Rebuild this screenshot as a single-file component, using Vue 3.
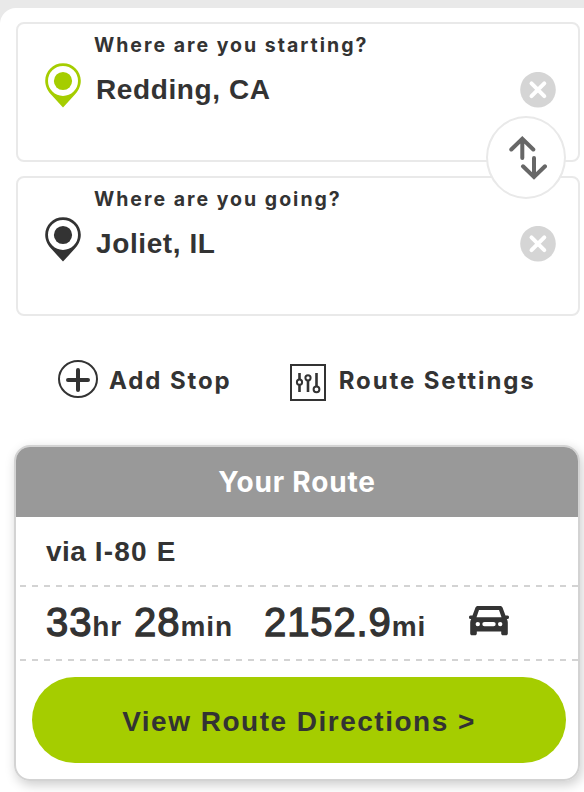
<template>
  <main class="planner">
    <section class="stops">
      <div v-for="stop in stops" :key="stop.id" class="stop">
        <label class="stop-label" :for="stop.id">{{ stop.label }}</label>
        <div class="stop-row">
          <svg class="pin" :class="stop.id" viewBox="0 0 36 45">
            <path fill="currentColor" fill-rule="evenodd" d="M18 0.2C8 0.2 0.2 8 0.2 17.800c0 6.200 3 10.700 6.800 14.800L18 44.600l11-12c3.800-4.100 6.800-8.600 6.800-14.800C35.800 8 28 0.200 18 0.200zM18 2.900a15 15 0 1 1 0 30a15 15 0 1 1 0-30z" />
            <circle cx="18" cy="18" r="9.100" fill="currentColor" />
          </svg>
          <span :id="stop.id" class="stop-value">{{ stop.value }}</span>
          <button class="clear" aria-label="Clear" @click="stop.value = ''">
            <svg viewBox="0 0 36 36">
              <circle cx="18" cy="17.700" r="17.800" fill="#d5d5d5" />
              <path d="M11.500 11.300l12.800 12.800M24.300 11.300L11.500 24.100" stroke="#fff" stroke-width="4" stroke-linecap="round" />
            </svg>
          </button>
        </div>
      </div>
      <button class="swap" aria-label="Swap stops" @click="swapStops">
        <svg viewBox="0 0 38 44" fill="none" stroke="#676767" stroke-width="4" stroke-linecap="round">
          <path d="M13.300 22V3M2.300 13.500L13.300 2.800l11 10.700" />
          <path d="M25 22v19M14 30.300L25 41l11-10.700" />
        </svg>
      </button>
    </section>

    <nav class="actions">
      <button class="action">
        <svg class="plus" viewBox="0 0 40 38" fill="none" stroke="#333">
          <ellipse cx="20" cy="19" rx="19" ry="18" stroke-width="2" />
          <path d="M20 10v20M10 20h20" stroke-width="4" stroke-linecap="round" />
        </svg>
        <span>Add Stop</span>
      </button>
      <button class="action">
        <svg class="sliders" viewBox="0 0 36 37" fill="none" stroke="#333">
          <rect x="1" y="1" width="34" height="35" stroke-width="2" />
          <path d="M9.500 9v6M9.500 21v7M18 17v11M26.500 9v13" stroke-width="2.600" />
          <g stroke-width="2">
            <circle cx="9.500" cy="18.200" r="2.600" />
            <circle cx="18" cy="13.800" r="2.600" />
            <circle cx="26.500" cy="25.300" r="2.900" />
          </g>
        </svg>
        <span>Route Settings</span>
      </button>
    </nav>

    <section class="route">
      <h2 class="route-title">Your Route</h2>
      <div class="via">via <b>{{ route.road }}</b></div>
      <div class="dashes"></div>
      <div class="stats">
        <span class="time">{{ route.hours }}<small>hr</small> {{ route.minutes }}<small>min</small></span>
        <span class="distance">{{ route.miles }}<small>mi</small></span>
        <svg class="car" viewBox="0 0 40 30">
          <path fill="#333" fill-rule="evenodd" d="M9 0h22c1.300 0 2.200.6 2.600 1.700L36.500 9.500h2c1 0 1.500.8 1.500 1.800s-.6 1.800-1.500 1.800h-.7c.7 1 1 2.200 1 3.500v10.900c0 1-.8 1.800-1.800 1.800h-3c-1 0-1.800-.8-1.800-1.800V25.500H7.800v2c0 1-.8 1.800-1.800 1.800H3c-1 0-1.800-.8-1.800-1.800V16.600c0-1.300.3-2.500 1-3.500h-.7C.6 13.100 0 12.300 0 11.300s.5-1.800 1.500-1.800h2L6.400 1.700C6.800.6 7.700 0 9 0zM10 4L7.500 11.200h25L30 4zM8.800 15.900a2.200 2.200 0 1 0 0 4.400a2.200 2.200 0 1 0 0-4.400zM15.500 15.900a2.200 2.200 0 0 0 0 4.400h9a2.200 2.200 0 0 0 0-4.400zM31.200 15.900a2.200 2.200 0 1 0 0 4.400a2.200 2.200 0 1 0 0-4.400z" />
        </svg>
      </div>
      <div class="dashes"></div>
      <button class="directions">View Route Directions &gt;</button>
    </section>
  </main>
</template>

<script setup>
import { reactive } from 'vue'

const stops = reactive([
  { id: 'start', label: 'Where are you starting?', value: 'Redding, CA' },
  { id: 'end', label: 'Where are you going?', value: 'Joliet, IL' }
])

const route = {
  road: 'I-80 E',
  hours: 33,
  minutes: 28,
  miles: '2152.9'
}

function swapStops() {
  const first = stops[0].value
  stops[0].value = stops[1].value
  stops[1].value = first
}
</script>

<style>
body {
  background: #e9e9e9;
  overflow: hidden;
}
</style>

<style scoped>
.planner {
  box-sizing: border-box;
  height: 784px;
  margin-top: 8px;
  padding: 14px 4px 0 14px;
  background: #fff;
  border-top-left-radius: 16px;
  color: #333;
  font-family: "Liberation Sans", Arial, sans-serif;
  font-size: 28px;
  font-weight: bold;
}

button {
  padding: 0;
  border: none;
  background: none;
  color: inherit;
  font: inherit;
  cursor: pointer;
}

svg {
  display: block;
}

.stops {
  position: relative;
  display: flex;
  flex-direction: column;
  gap: 14px;
  margin-left: 2px;
}

.stop {
  box-sizing: border-box;
  height: 140px;
  padding: 9px 22px 0 27px;
  border: 2px solid #e9e9e9;
  border-radius: 8px;
}

.stop-label {
  display: block;
  margin-left: 49px;
  font: 700 19.5px/24px Inter, sans-serif;
  letter-spacing: 2px;
}

.stop-row {
  display: flex;
  align-items: flex-end;
  height: 45px;
  margin-top: 6px;
}

.pin {
  width: 36px;
  height: 45px;
}

.pin.start {
  color: #a5cd00;
}

.stop-value {
  flex: 1;
  margin-left: 15px;
  line-height: 36px;
  letter-spacing: 0.6px;
}

.clear {
  width: 36px;
  height: 36px;
}

.swap {
  position: absolute;
  top: 94px;
  right: 14px;
  box-sizing: border-box;
  width: 80px;
  height: 83px;
  padding-left: 21px;
  border: 2px solid #e9e9e9;
  border-radius: 50%;
  background: #fff;
}

.swap svg {
  width: 38px;
  height: 44px;
}

.actions {
  display: flex;
  gap: 58px;
  height: 40px;
  margin: 44px 0 45px 44px;
}

.action {
  display: flex;
  font: 700 24px/42px Inter, sans-serif;
  letter-spacing: 1.9px;
}

.plus {
  width: 40px;
  height: 38px;
  margin-right: 11px;
}

.sliders {
  width: 36px;
  height: 37px;
  margin: 4px 13px 0 0;
}

.route {
  box-sizing: border-box;
  height: 336px;
  border: 2px solid #d3d3d3;
  border-radius: 16px;
  box-shadow: 2px 4px 12px rgba(0, 0, 0, 0.2);
  overflow: hidden;
}

.route-title {
  height: 70px;
  margin: 0;
  background: #999;
  color: #fff;
  text-align: center;
  font: 700 28px/70px Inter, sans-serif;
  letter-spacing: 0.8px;
}

.via {
  height: 68px;
  padding-left: 30px;
  line-height: 69px;
  letter-spacing: 0.5px;
}

.via b {
  letter-spacing: 1.2px;
}

.dashes {
  height: 2px;
  margin-left: 4px;
  background: repeating-linear-gradient(90deg, #d3d3d3 0 6px, transparent 6px 12px);
}

.stats {
  display: flex;
  height: 72px;
  padding-left: 30px;
  font-size: 40px;
  font-weight: normal;
  line-height: 70px;
  letter-spacing: 0.9px;
  -webkit-text-stroke: 1.3px #333;
}

.stats small {
  font-size: 28px;
  font-weight: bold;
  -webkit-text-stroke: 0;
}

.time {
  width: 218px;
}

.distance {
  width: 205px;
}

.car {
  width: 40px;
  height: 30px;
  margin-top: 19px;
}

.directions {
  display: block;
  width: 534px;
  height: 86px;
  margin: 16px 0 0 16px;
  padding-top: 3px;
  border-radius: 43px;
  background: #a5cd00;
  letter-spacing: 1.5px;
}
</style>
